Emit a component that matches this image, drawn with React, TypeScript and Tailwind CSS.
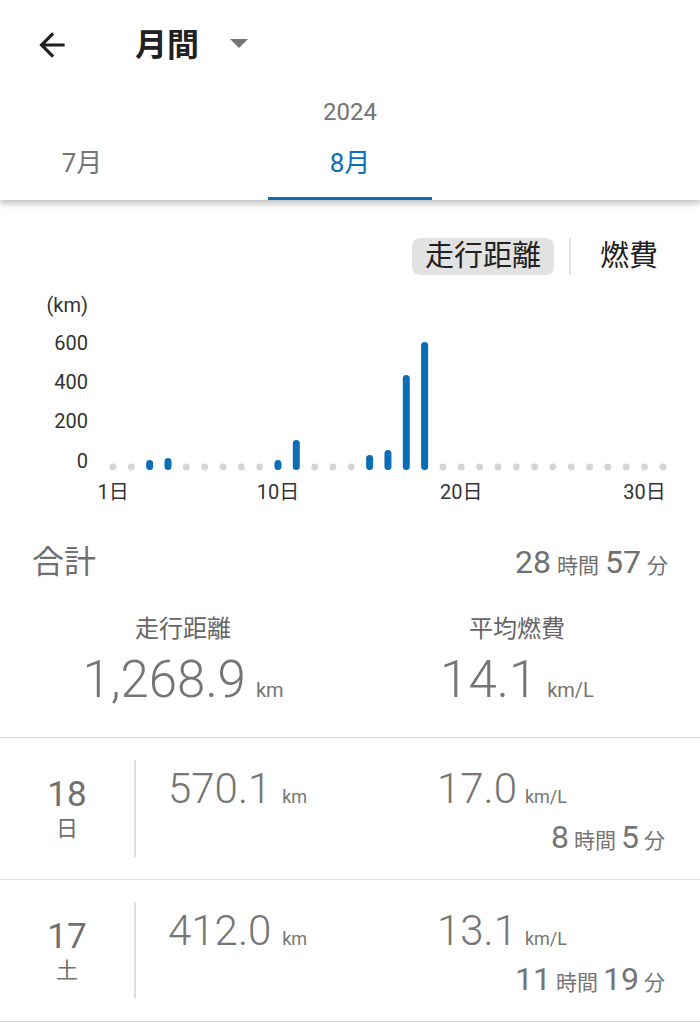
import React from 'react';

const BLUE = '#0b6db5';

const bars: Record<number, number> = { 3: 10, 4: 12, 10: 10, 11: 30, 15: 15, 16: 20, 17: 95, 18: 128 };
const dayX = (d: number) => 113 + (d - 1) * 18.33;

const Chart = () => {
  const days = Array.from({ length: 31 }, (_, i) => i + 1);
  return (
    <svg width={700} height={225} className="block">
      {/* y axis */}
      <g fill="#333" fontSize={20} textAnchor="end" dominantBaseline="central">
        <text x={88} y={20}>(km)</text>
        <text x={88} y={58}>600</text>
        <text x={88} y={97}>400</text>
        <text x={88} y={136}>200</text>
        <text x={88} y={176}>0</text>
      </g>
      {days.map((d) =>
        bars[d] ? (
          <rect key={d} x={dayX(d) - 3.5} y={185 - bars[d]} width={7} height={bars[d]} rx={3.5} fill={BLUE} />
        ) : (
          <circle key={d} cx={dayX(d)} cy={182} r={3.4} fill="#d4d4d4" />
        )
      )}
      <g fill="#333" fontSize={20} textAnchor="middle" dominantBaseline="central">
        {[1, 10, 20, 30].map((d) => (
          <text key={d} x={dayX(d)} y={207}>
            {d}日
          </text>
        ))}
      </g>
    </svg>
  );
};

const DayRow = ({ day, week, dist, eco, hours, mins }: { day: string; week: string; dist: string; eco: string; hours: string; mins: string }) => (
  <div className="flex h-[142px] border-b border-[#dcdcdc]">
    <div className="w-[134px] self-center flex flex-col items-center text-[#707070]">
      <span className="text-[35px] leading-[40px]">{day}</span>
      <span className="text-[22px] leading-[28px]">{week}</span>
    </div>
    <div className="w-[2px] h-[97px] self-center bg-[#dedede]" />
    <div className="flex-1 flex pt-[27px] pl-[32px] pr-[35px] text-[#757575]">
      <div className="w-[269px] flex items-baseline h-[48px]">
        <span className="text-[42px] leading-[48px] font-light">{dist}</span>
        <span className="ml-[11px] text-[18px]">km</span>
      </div>
      <div className="flex-1 flex flex-col">
        <div className="flex items-baseline h-[48px]">
          <span className="text-[42px] leading-[48px] font-light">{eco}</span>
          <span className="ml-[8px] text-[18px]">km/L</span>
        </div>
        <div className="mt-[4px] flex items-baseline justify-end leading-[40px]">
          <span className="text-[32px]">{hours}</span>
          <span className="mx-[5px] text-[21px]">時間</span>
          <span className="text-[32px]">{mins}</span>
          <span className="ml-[5px] text-[21px]">分</span>
        </div>
      </div>
    </div>
  </div>
);

export default function App() {
  return (
    <div className="w-[700px] h-[1024px] overflow-hidden bg-white font-['Roboto','Noto_Sans_CJK_JP',sans-serif]">
      {/* header */}
      <div className="relative z-10 bg-white shadow-[0_3px_7px_rgba(0,0,0,0.28)]">
        <div className="h-[90px] flex items-center">
          <svg width={38} height={38} viewBox="0 0 24 24" className="ml-[33px]">
            <path d="M20 11H7.83l5.59-5.59L12 4l-8 8 8 8 1.41-1.41L7.83 13H20v-2z" fill="#212121" />
          </svg>
          <span className="ml-[64px] text-[32px] font-bold text-[#212121] leading-none">月間</span>
          <svg width={18} height={10} viewBox="0 0 18 10" className="ml-[31px] mt-[-2px]">
            <path d="M0 0h18l-9 9z" fill="#757575" />
          </svg>
        </div>
        <div className="h-[44px] leading-[44px] text-center text-[24px] text-[#757575]">2024</div>
        <div className="flex h-[66px]">
          <div className="w-[164px] flex flex-col">
            <div className="h-[58px] flex items-center justify-center text-[26px] text-[#757575]">7月</div>
          </div>
          <div className="ml-[104px] w-[164px] flex flex-col">
            <div className="h-[58px] flex items-center justify-center text-[26px]" style={{ color: BLUE }}>
              8月
            </div>
            <div className="mt-[5px] h-[3px]" style={{ backgroundColor: BLUE }} />
          </div>
        </div>
      </div>

      {/* toggle */}
      <div className="mt-[38px] flex justify-end items-center pr-[28px]">
        <div className="h-[37px] px-[13px] rounded-[8px] bg-[#e2e2e2] flex items-center text-[29px] text-[#212121]">走行距離</div>
        <div className="ml-[15px] w-[2px] h-[37px] bg-[#e4e4e4]" />
        <div className="ml-[15px] h-[37px] px-[14px] flex items-center text-[29px] text-[#212121]">燃費</div>
      </div>

      <div className="mt-[10px]">
        <Chart />
      </div>

      {/* summary */}
      <div className="mt-[32px] px-[32px] flex items-baseline justify-between leading-[40px] text-[#707070]">
        <span className="text-[32px]">合計</span>
        <div className="flex items-baseline">
          <span className="text-[32px]">28</span>
          <span className="mx-[6px] text-[21px]">時間</span>
          <span className="text-[32px]">57</span>
          <span className="ml-[6px] text-[21px]">分</span>
        </div>
      </div>
      <div className="mt-[27px] px-[16px] grid grid-cols-2 pb-[29px] border-b border-[#dcdcdc]">
        <div className="flex flex-col items-center">
          <span className="text-[24px] leading-[32px] text-[#666]">走行距離</span>
          <div className="mt-[7px] flex items-baseline text-[#757575]">
            <span className="text-[51px] leading-[56px] font-light">1,268.9</span>
            <span className="ml-[10px] text-[20px]">km</span>
          </div>
        </div>
        <div className="flex flex-col items-center">
          <span className="text-[24px] leading-[32px] text-[#666]">平均燃費</span>
          <div className="mt-[7px] flex items-baseline text-[#757575]">
            <span className="text-[51px] leading-[56px] font-light">14.1</span>
            <span className="ml-[10px] text-[20px]">km/L</span>
          </div>
        </div>
      </div>

      <DayRow day="18" week="日" dist="570.1" eco="17.0" hours="8" mins="5" />
      <DayRow day="17" week="土" dist="412.0" eco="13.1" hours="11" mins="19" />
    </div>
  );
}
